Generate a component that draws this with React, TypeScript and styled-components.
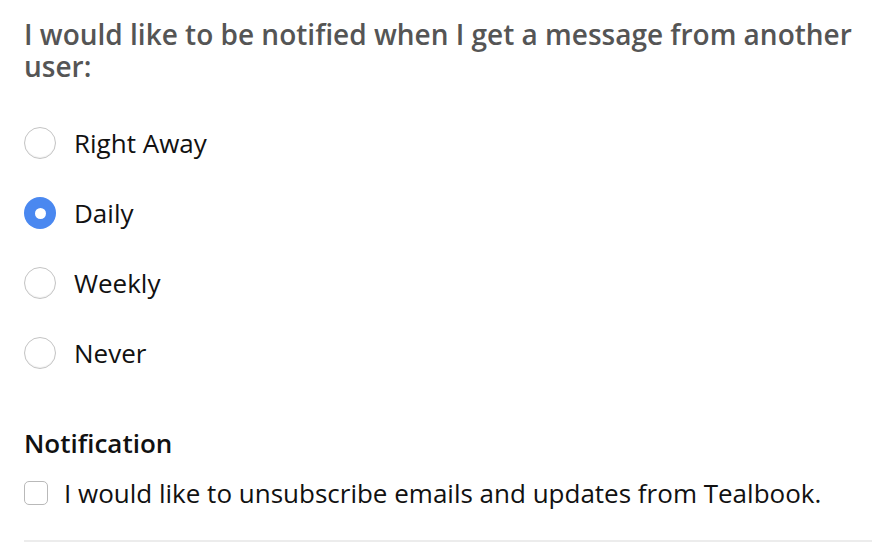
import styled, { createGlobalStyle } from 'styled-components';

const GlobalStyle = createGlobalStyle`
  body {
    margin: 0;
    background: #ffffff;
    font-family: "Open Sans", "Liberation Sans", sans-serif;
  }
`;

const Page = styled.div`
  padding: 18px 0 0 24px;
`;

const Question = styled.h2`
  margin: 0;
  font-size: 28px;
  line-height: 32px;
  font-weight: 600;
  color: #555555;
`;

const OptionList = styled.div`
  display: flex;
  flex-direction: column;
  gap: 38px;
  margin-top: 45px;
`;

const Option = styled.label`
  display: flex;
  align-items: center;
  gap: 18px;
  height: 32px;
  font-size: 26px;
  color: #111111;
  cursor: pointer;
`;

const Radio = styled.span<{ $checked?: boolean }>`
  box-sizing: border-box;
  width: 32px;
  height: 32px;
  border-radius: 50%;
  flex-shrink: 0;
  display: flex;
  align-items: center;
  justify-content: center;
  background: ${(p) => (p.$checked ? '#4a88f0' : '#ffffff')};
  border: ${(p) => (p.$checked ? 'none' : '1px solid #c4c4c4')};
  box-shadow: ${(p) => (p.$checked ? 'none' : 'inset 0 -1px 1px rgba(0,0,0,0.06)')};

  &::after {
    content: '';
    display: ${(p) => (p.$checked ? 'block' : 'none')};
    width: 11px;
    height: 11px;
    border-radius: 50%;
    background: #ffffff;
  }
`;

const SectionTitle = styled.h3`
  margin: 58px 0 0;
  font-size: 26px;
  line-height: 32px;
  font-weight: 600;
  color: #111111;
`;

const CheckRow = styled.label`
  display: flex;
  align-items: center;
  gap: 16px;
  margin-top: 17px;
  font-size: 26px;
  line-height: 34px;
  color: #111111;
`;

const Checkbox = styled.span`
  box-sizing: border-box;
  width: 24px;
  height: 24px;
  border: 1px solid #b9b9b9;
  border-radius: 5px;
  background: #ffffff;
  flex-shrink: 0;
`;

const Divider = styled.hr`
  margin: 30px 0 0;
  border: none;
  border-top: 2px solid #ececec;
`;

const options = ['Right Away', 'Daily', 'Weekly', 'Never'];

export default function App() {
  const selected = 'Daily';
  return (
    <>
      <GlobalStyle />
      <Page>
        <Question>I would like to be notified when I get a message from another user:</Question>
        <OptionList>
          {options.map((o) => (
            <Option key={o}>
              <Radio $checked={o === selected} />
              {o}
            </Option>
          ))}
        </OptionList>
        <SectionTitle>Notification</SectionTitle>
        <CheckRow>
          <Checkbox />
          I would like to unsubscribe emails and updates from Tealbook.
        </CheckRow>
        <Divider />
      </Page>
    </>
  );
}
